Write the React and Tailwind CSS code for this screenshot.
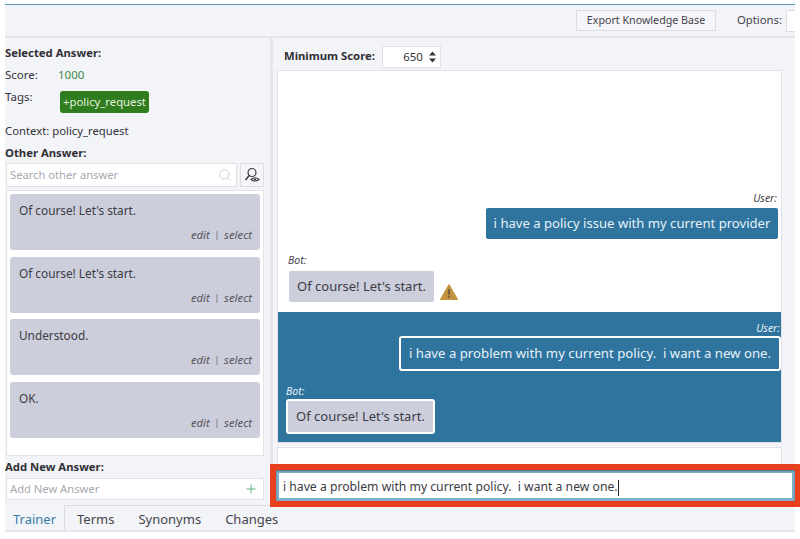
import React from "react";
import { Search, Plus } from "lucide-react";

function AnswerCard({ text }) {
  return (
    <div className="flex h-[56px] shrink-0 flex-col justify-between rounded-[3px] bg-[#cdcedb] pb-[8px] pl-[9px] pr-[8px] pt-[8px]">
      <div className="text-[11.8px] leading-[16px] text-[#3c3c44]">{text}</div>
      <div className="text-right text-[11.3px] leading-[14px] italic text-[#55555e]">
        edit <span className="px-[2px] align-[1px] text-[8px] not-italic">|</span> select
      </div>
    </div>
  );
}

function Warning() {
  return (
    <svg width="18" height="16" viewBox="0 0 18 16" className="mb-[2px] ml-[6px]">
      <path d="M9 0.5 L17.6 15.5 L0.4 15.5 Z" fill="#c4923d" stroke="#c4923d" strokeLinejoin="round" />
      <rect x="8.1" y="5" width="1.8" height="5.5" fill="#6b5a3c" />
      <rect x="8.1" y="11.6" width="1.8" height="1.9" fill="#6b5a3c" />
    </svg>
  );
}

export default function App() {
  return (
    <div className="relative h-[539px] w-[800px] overflow-hidden bg-white pb-[7px] pl-[5px] pt-[4px] font-['Noto_Sans','Open_Sans',sans-serif] text-[#33333b]">
      <div className="flex h-full w-[790px] flex-col border-t border-[#5f97b8] bg-[#f3f4f8]">
        {/* top bar */}
        <div className="flex h-[33px] shrink-0 items-center border-b-2 border-[#e6e6ed] pl-[571px]">
          <button className="h-[21px] w-[140px] border border-[#dcdce4] bg-[#f5f5f9] text-[10.7px] text-[#44444c]">
            Export Knowledge Base
          </button>
          <span className="ml-[21px] text-[11.3px] text-[#44444c]">Options:</span>
          <div className="ml-[4px] h-[22px] flex-1 border-y border-l border-[#dcdce4] bg-white" />
        </div>

        <div className="flex min-h-0 flex-1">
          {/* left pane */}
          <div className="flex w-[268px] shrink-0 flex-col border-r-[3px] border-[#e6e6ed] pl-[1px] pr-[6px]">
            <div className="-ml-[1px] mt-[7px] text-[11.3px] font-bold leading-[16px] text-[#2f2f36]">Selected Answer:</div>
            <div className="-ml-[1px] mt-[6px] flex text-[11.5px] leading-[16px]">
              <span className="w-[53px]">Score:</span>
              <span className="text-[#3f8a4a]">1000</span>
            </div>
            <div className="-ml-[1px] mt-[6px] flex items-start text-[11.5px] leading-[16px]">
              <span className="w-[55px]">Tags:</span>
              <span className="mt-[2px] h-[22px] w-[89px] rounded-[3px] bg-[#2f7d1e] text-center text-[11.3px] leading-[21px] text-[#e4f2de]">
                +policy_request
              </span>
            </div>
            <div className="-ml-[1px] mt-[10px] text-[11.3px] leading-[16px]">Context: policy_request</div>
            <div className="-ml-[1px] mt-[6px] text-[11.3px] font-bold leading-[16px] text-[#2f2f36]">Other Answer:</div>
            <div className="mt-[2px] flex gap-[3px]">
              <div className="flex h-[24px] w-[231px] items-center justify-between border border-[#e1e1e8] bg-white pl-[3px] pr-[4px] text-[11.2px] text-[#a9a9b0]">
                Search other answer
                <Search size={14} strokeWidth={1.3} className="text-[#c4c4cb]" />
              </div>
              <div className="flex h-[24px] w-[24px] items-center justify-center border border-[#dcdce4] bg-[#f5f5f9]">
                <svg width="16" height="16" viewBox="0 0 16 16" fill="none" stroke="#3c3c44" strokeWidth="1.2">
                  <circle cx="8" cy="5.5" r="4" />
                  <path d="M5.2 8.5 L1.5 13" strokeWidth="1.6" />
                  <path d="M7 12.5 Q11 9 15 12.5 Q11 15.5 7 12.5 Z" fill="#f5f5f9" />
                  <circle cx="11" cy="12.5" r="1.1" fill="#3c3c44" stroke="none" />
                </svg>
              </div>
            </div>
            <div className="mt-[3px] flex h-[266px] flex-col gap-[6.6px] border border-[#e1e1e8] bg-white p-[3px]">
              <AnswerCard text="Of course! Let's start." />
              <AnswerCard text="Of course! Let's start." />
              <AnswerCard text="Understood." />
              <AnswerCard text="OK." />
            </div>
            <div className="-ml-[1px] mt-[3px] text-[11.3px] font-bold leading-[16px] text-[#2f2f36]">Add New Answer:</div>
            <div className="mt-[3px] flex h-[22px] items-center justify-between border border-[#e1e1e8] bg-white pl-[3px] pr-[5px] text-[11.2px] text-[#a9a9b0]">
              Add New Answer
              <Plus size={14} strokeWidth={1.7} className="text-[#62b27a]" />
            </div>
          </div>

          {/* chat pane */}
          <div className="flex min-w-0 flex-1 flex-col pl-[4px]">
            <div className="mt-[7px] flex h-[23px] shrink-0 items-center">
              <span className="ml-[7px] text-[11.3px] font-bold text-[#2f2f36]">Minimum Score:</span>
              <div className="ml-[7px] flex h-[22px] w-[59px] items-center justify-end gap-[5px] border border-[#e1e1e8] bg-white pr-[3px] text-[11.5px]">
                650
                <svg width="9" height="14" viewBox="0 0 9 14" fill="#33333b">
                  <path d="M4.5 1.5 L8 5.5 L1 5.5 Z" />
                  <path d="M1 8.5 L8 8.5 L4.5 12.5 Z" />
                </svg>
              </div>
            </div>

            <div className="mt-[2px] flex h-[373px] w-[505px] shrink-0 flex-col justify-end border border-[#e1e1e8] bg-white">
              <div className="flex flex-col pb-[10px] pl-[11px] pr-[3px]">
                <div className="pr-[1px] text-right text-[10.5px] italic leading-[14px] text-[#44444c]">User:</div>
                <div className="mt-[3px] h-[31px] w-[292px] self-end rounded-[2px] bg-[#2e749f] text-center text-[13.1px] leading-[30px] whitespace-nowrap text-[#e6f1f7]">
                  i have a policy issue with my current provider
                </div>
                <div className="-ml-[1px] mt-[14px] text-[10.5px] italic leading-[14px] text-[#44444c]">Bot:</div>
                <div className="mt-[4px] flex items-end">
                  <div className="h-[31px] w-[145px] rounded-[2px] bg-[#cdcedb] text-center text-[13px] leading-[30px] text-[#3c3c44]">
                    Of course! Let's start.
                  </div>
                  <Warning />
                </div>
              </div>
              <div className="flex h-[130px] flex-col bg-[#2e749f] pl-[8px] pt-[9px]">
                <div className="pr-[1px] text-right text-[10.5px] italic leading-[14px] text-[#e6f1f7]">User:</div>
                <div className="mt-[1px] h-[35px] w-[382px] self-end rounded-[3px] border-2 border-white text-center text-[13.2px] leading-[30px] whitespace-nowrap text-[#e6f1f7]">
                  i have a problem with my current policy.&nbsp; i want a new one.
                </div>
                <div className="mt-[13px] text-[10.5px] italic leading-[14px] text-[#e6f1f7]">Bot:</div>
                <div className="mt-[1px] h-[35px] w-[149px] rounded-[3px] border-2 border-white bg-[#cdcedb] text-center text-[13px] leading-[30px] text-[#3c3c44]">
                  Of course! Let's start.
                </div>
              </div>
            </div>

            <div className="mt-[4px] h-[23px] w-[505px] shrink-0 border border-[#e1e1e8] bg-white" />
            <div className="-ml-[1px] flex h-[31px] w-[519px] shrink-0 items-center border-[3px] border-[#7fb0c9] bg-white pl-[4px] pt-[4px] text-[12.2px] whitespace-nowrap text-[#3c3c44]">
              i have a problem with my current policy.&nbsp; i want a new one.
              <span className="h-[16px] w-[1px] bg-[#222]" />
            </div>
          </div>
        </div>

        {/* tabs */}
        <div className="flex h-[27px] shrink-0 border-b-2 border-[#e6e6ed] text-[13px] leading-[26px]">
          <div className="w-[60px] border-r border-[#dcdce4] pt-[1px] text-center text-[#3a7ba6]">Trainer</div>
          <div className="flex flex-1 gap-[24px] border-t border-[#dcdce4] pl-[12px] text-[#44444c]">
            <span>Terms</span>
            <span>Synonyms</span>
            <span>Changes</span>
          </div>
        </div>
      </div>

      {/* annotation box */}
      <div className="absolute left-[270px] top-[464px] h-[43px] w-[530px] border-[6px] border-r-[5px] border-[#e8401f] shadow-[inset_0_1px_2px_rgba(0,0,0,0.4)]" />
    </div>
  );
}
